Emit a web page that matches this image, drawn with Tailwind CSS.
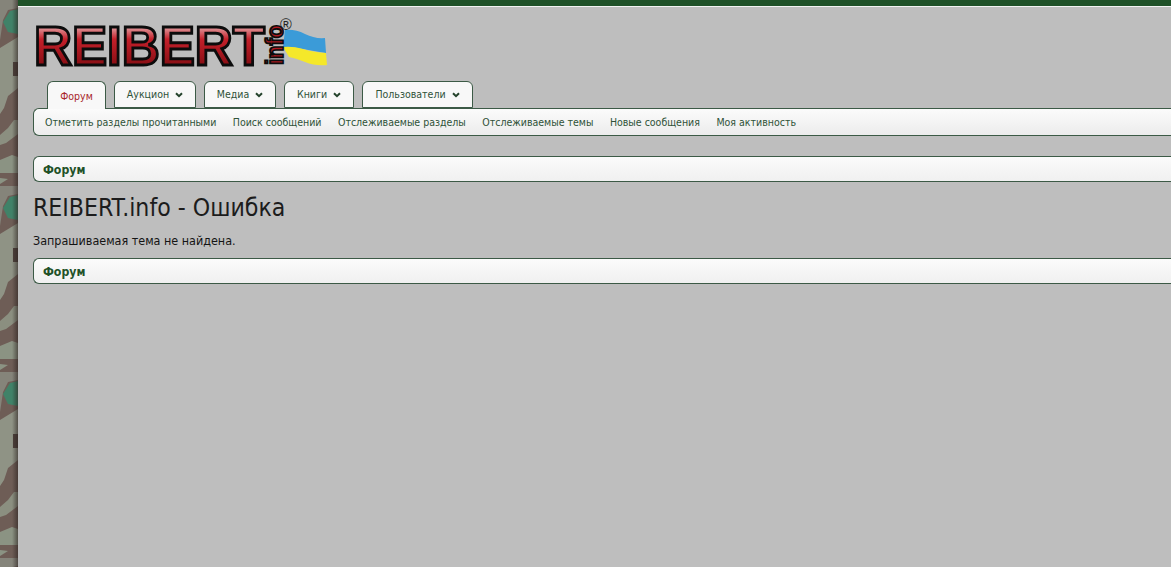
<!DOCTYPE html>
<html lang="ru">
<head>
    <meta charset="UTF-8">
    <title>REIBERT.info - Ошибка</title>
    <script src="https://cdn.jsdelivr.net/npm/@tailwindcss/browser@4"></script>
</head>
<body class="h-[567px] overflow-hidden flex bg-[#bebebe] font-['DejaVu_Sans',sans-serif] font-stretch-condensed text-[#141414]">
    <!-- camo strip -->
    <svg class="w-[18px] h-[567px] shrink-0" viewBox="0 0 18 567" preserveAspectRatio="none">
        <defs>
            <pattern id="camo" width="18" height="186" patternUnits="userSpaceOnUse">
                <rect width="18" height="186" fill="#6e5d56"/>
                <polygon points="0,0 18,0 18,8 8,10 3,20 0,40" fill="#85847a"/>
                <polygon points="3,22 10,11 18,9 18,34 8,32" fill="#3f8268"/>
                <polygon points="0,48 18,37 18,88 8,96 4,108 0,114" fill="#8f9385"/>
                <rect x="13" y="62" width="5" height="14" fill="#4e403b"/>
                <polygon points="0,135 8,128 14,120 18,120 18,134 6,143 0,145" fill="#8b8f80"/>
                <polygon points="0,160 12,155 18,157 18,173 0,173" fill="#8b9383"/>
                <polygon points="0,178 8,179 0,184" fill="#8b9383"/>
            </pattern>
            <linearGradient id="edge" x1="0" y1="0" x2="1" y2="0">
                <stop offset="0" stop-color="#2c2320" stop-opacity="0"/>
                <stop offset="1" stop-color="#2c2320" stop-opacity="0.6"/>
            </linearGradient>
            <filter id="soft"><feGaussianBlur stdDeviation="0.5"/></filter>
        </defs>
        <rect width="18" height="567" fill="url(#camo)" filter="url(#soft)"/>
        <rect x="12" width="6" height="567" fill="url(#edge)"/>
    </svg>

    <div class="flex-1 min-w-0 flex flex-col">
        <div class="h-[6px] bg-[#1f5128]"></div>
        <div class="h-px bg-[#f2f2f2]"></div>

        <div class="pl-[15px] flex flex-col">
            <!-- logo -->
            <svg class="w-[300px] h-[73px] mb-px block" viewBox="0 0 300 73">
                <defs>
                    <linearGradient id="red" x1="0" y1="0" x2="0" y2="1">
                        <stop offset="0.12" stop-color="#efd6d6"/>
                        <stop offset="0.4" stop-color="#c4202a"/>
                        <stop offset="0.8" stop-color="#8a0f15"/>
                    </linearGradient>
                    <filter id="flag"><feGaussianBlur stdDeviation="0.6"/></filter>
                </defs>
                <g filter="url(#flag)">
                    <path d="M252 23 Q262 22 272 27 T292 31 L293 46 Q280 44 270 42 T250 40 Z" fill="#3b9bd8"/>
                    <path d="M250 40 Q260 39 270 42 T293 46 L294 58 Q282 59 272 55 T256 50 Z" fill="#f5e82c"/>
                </g>
                <text x="1" y="58" font-family="Liberation Sans" font-weight="700" font-size="56" textLength="231" lengthAdjust="spacingAndGlyphs" fill="url(#red)" stroke="#0c0c0c" stroke-width="3">REIBERT</text>
                <text transform="translate(250,58) rotate(-90)" font-family="Liberation Sans" font-weight="700" font-size="23" textLength="40" lengthAdjust="spacingAndGlyphs" fill="#b01a20" stroke="#0c0c0c" stroke-width="1.8">info</text>
                <text x="247" y="23" font-family="Liberation Sans" font-size="16" fill="#222">®</text>
            </svg>

            <!-- tabs -->
            <div class="flex items-end pl-[14px] text-[10.5px] text-[#2f5238] relative z-10">
                <div class="w-[59px] h-[28px] -mb-px bg-[#f8f8f8] border border-b-0 border-[#3c5a46] rounded-t-[6px] flex items-center justify-center text-[#a8262a] pt-[2px]">Форум</div>
                <div class="w-[82px] h-[27px] ml-[8px] bg-[#f8f8f8] border border-[#3c5a46] rounded-t-[6px] flex items-center justify-center gap-[6px]">Аукцион <svg class="w-[8px] h-[6px]" viewBox="0 0 8 6"><path d="M1 1.2 4 4.2 7 1.2" fill="none" stroke="#24432c" stroke-width="2"/></svg></div>
                <div class="w-[72px] h-[27px] ml-[8px] bg-[#f8f8f8] border border-[#3c5a46] rounded-t-[6px] flex items-center justify-center gap-[6px]">Медиа <svg class="w-[8px] h-[6px]" viewBox="0 0 8 6"><path d="M1 1.2 4 4.2 7 1.2" fill="none" stroke="#24432c" stroke-width="2"/></svg></div>
                <div class="w-[70px] h-[27px] ml-[8px] bg-[#f8f8f8] border border-[#3c5a46] rounded-t-[6px] flex items-center justify-center gap-[6px]">Книги <svg class="w-[8px] h-[6px]" viewBox="0 0 8 6"><path d="M1 1.2 4 4.2 7 1.2" fill="none" stroke="#24432c" stroke-width="2"/></svg></div>
                <div class="w-[111px] h-[27px] ml-[8px] bg-[#f8f8f8] border border-[#3c5a46] rounded-t-[6px] flex items-center justify-center gap-[6px]">Пользователи <svg class="w-[8px] h-[6px]" viewBox="0 0 8 6"><path d="M1 1.2 4 4.2 7 1.2" fill="none" stroke="#24432c" stroke-width="2"/></svg></div>
            </div>

            <!-- sub nav -->
            <div class="h-[28px] bg-gradient-to-b from-[#fbfbfb] to-[#ececec] border border-r-0 border-[#3c5a46] rounded-l-[6px] flex items-center pl-[11px] pt-[2px] gap-[16.5px] text-[10.5px] text-[#2f5238] whitespace-nowrap">
                <span>Отметить разделы прочитанными</span>
                <span>Поиск сообщений</span>
                <span>Отслеживаемые разделы</span>
                <span>Отслеживаемые темы</span>
                <span>Новые сообщения</span>
                <span>Моя активность</span>
            </div>

            <!-- breadcrumb -->
            <div class="h-[26px] mt-[20px] bg-gradient-to-b from-[#fbfbfb] to-[#f0f0f0] border border-r-0 border-[#3c5a46] rounded-l-[6px] flex items-center pl-[9px] pt-[2px] text-[12.2px] font-bold text-[#1f5128]">Форум</div>

            <h1 class="mt-[12px] text-[24.6px] leading-[28px] text-[#1c1c1c]">REIBERT.info - Ошибка</h1>
            <p class="mt-[11px] text-[12.45px] leading-[15px]">Запрашиваемая тема не найдена.</p>

            <div class="h-[26px] mt-[10px] bg-gradient-to-b from-[#fbfbfb] to-[#f0f0f0] border border-r-0 border-[#3c5a46] rounded-l-[6px] flex items-center pl-[9px] pt-[2px] text-[12.2px] font-bold text-[#1f5128]">Форум</div>
        </div>
    </div>
</body>
</html>
